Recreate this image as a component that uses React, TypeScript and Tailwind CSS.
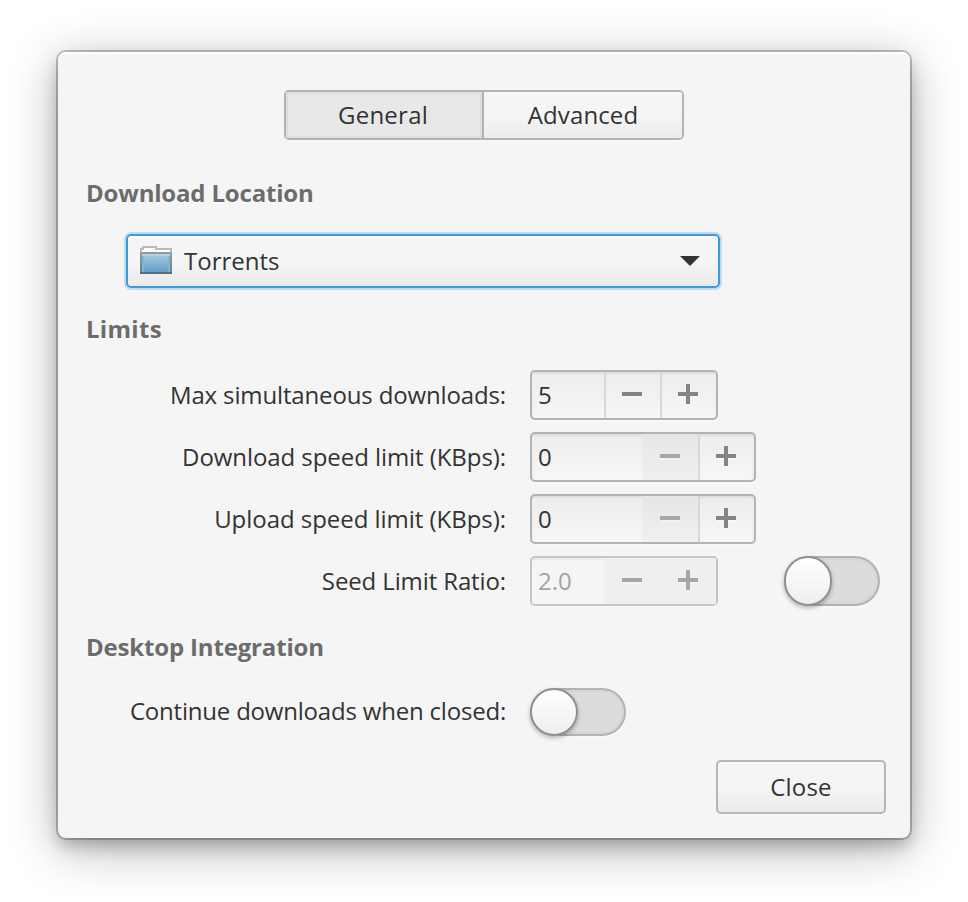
import { ReactNode } from "react";

function Heading({ children, tracking }: { children: ReactNode; tracking: string }) {
  return (
    <h2 className={`text-[24px] leading-[34px] font-bold text-[#6c6c6c] [text-shadow:0_2px_0_rgba(255,255,255,0.5)] ${tracking}`}>
      {children}
    </h2>
  );
}

function Label({ children, tracking }: { children: ReactNode; tracking: string }) {
  return <div className={`w-[448px] text-right whitespace-nowrap ${tracking}`}>{children}</div>;
}

function Sign({ plus, dim }: { plus?: boolean; dim?: boolean }) {
  const d = plus ? "M0 8h8V0h4v8h8v4h-8v8H8v-8H0z" : "M0 8h20v4H0z";
  return (
    <svg width="20" height="22" viewBox="0 0 20 22" className="block">
      <path d={d} transform="translate(0 2)" fill="#fff" fillOpacity="0.4" />
      <path d={d} fill={dim ? "#a6a6a6" : "#848484"} />
    </svg>
  );
}

interface SpinProps {
  value: string;
  entry: string;
  minusOff?: boolean;
  off?: boolean;
}

function Spin({ value, entry, minusOff, off }: SpinProps) {
  const frame = off
    ? "border-[#c6c6c6] bg-[#f5f5f5] text-[#a3a3a3] shadow-[inset_0_2px_0_#ebebeb,0_2px_0_rgba(255,255,255,0.3)]"
    : "border-[#b3b3b3] bg-linear-to-b from-[#ececec] to-[#f7f7f7] shadow-[inset_0_2px_0_#e0e0e0,inset_2px_0_0_#efefef,inset_-2px_0_0_#efefef,0_2px_0_rgba(255,255,255,0.3)]";
  const minus = off
    ? "bg-[#efefef] pl-[18px]"
    : minusOff
      ? "bg-linear-to-b from-[#e6e6e6] to-[#f0f0f0] pl-[18px]"
      : "border-l-2 border-[#d8d8d8] pl-[16px]";
  const plus = off ? "bg-[#efefef] pl-[18px]" : "border-l-2 border-[#d8d8d8] pl-[16px]";
  return (
    <div className={`flex h-[50px] rounded-[5px] border-2 ${frame}`}>
      <div className={`flex items-center pl-[6px] ${entry}`}>{value}</div>
      <div className={`w-[56px] pt-[12px] ${minus}`}>
        <Sign dim={off || minusOff} />
      </div>
      <div className={`w-[56px] pt-[12px] ${plus}`}>
        <Sign plus dim={off} />
      </div>
    </div>
  );
}

function Switch({ size }: { size: string }) {
  return (
    <div className={`w-[96px] rounded-full border-2 border-[#b3b3b3] bg-[#dcdcdc] shadow-[inset_0_0_0_2px_#d5d5d5,0_2px_0_rgba(255,255,255,0.3)] ${size}`}>
      <div className="-mt-[2px] -ml-[2px] h-[calc(100%+4px)] w-[48px] rounded-full border-2 border-[#909090] bg-linear-to-b from-white to-[#eeeeee] shadow-[0_2px_4px_rgba(0,0,0,0.28)]" />
    </div>
  );
}

function FolderIcon() {
  return (
    <svg width="32" height="28" viewBox="0 0 32 28">
      <defs>
        <linearGradient id="folder" x1="0" y1="0" x2="0" y2="1">
          <stop offset="0" stopColor="#a3c7df" />
          <stop offset="1" stopColor="#639dc7" />
        </linearGradient>
        <linearGradient id="edge" x1="0" y1="0" x2="0" y2="1">
          <stop offset="0" stopColor="#9a9a9a" />
          <stop offset="1" stopColor="#5f7f96" />
        </linearGradient>
      </defs>
      <path d="M1 8V3h2V1h13v2h15v5" fill="#fdfdfd" stroke="#bababa" strokeWidth="2" />
      <rect x="0" y="6" width="32" height="22" fill="url(#edge)" />
      <rect x="2" y="8" width="28" height="18" fill="#b4d2e5" />
      <rect x="4" y="10" width="24" height="16" fill="url(#folder)" />
      <rect x="2" y="10" width="2" height="16" fill="#83b2d3" />
      <rect x="28" y="10" width="2" height="16" fill="#83b2d3" />
      <rect x="0" y="26" width="32" height="2" fill="#4d6f88" />
    </svg>
  );
}

export default function App() {
  return (
    <div className="h-[902px] w-[968px] overflow-hidden bg-white px-[58px] pt-[52px] font-['Open_Sans','Noto_Sans',sans-serif] text-[24px] leading-[34px] text-[#333333]">
      <main className="flex h-[786px] w-[852px] flex-col rounded-[8px] bg-[#f5f5f5] shadow-[inset_0_2px_0_#ffffff,0_0_0_2px_rgba(0,0,0,0.22),0_8px_16px_rgba(0,0,0,0.22),0_10px_50px_rgba(0,0,0,0.31)]">
        <div className="mt-[38px] ml-[226px] flex h-[50px] w-[400px] rounded-[5px] border-2 border-[#b3b3b3] text-center shadow-[0_2px_0_rgba(255,255,255,0.3)]">
          <div className="flex w-[198px] items-center justify-center border-r-2 border-[#b3b3b3] bg-[#e8e8e8] pr-[2px] tracking-[0.25px] shadow-[inset_0_0_0_2px_#dddddd]">General</div>
          <div className="flex w-[198px] items-center justify-center rounded-r-[3px] bg-linear-to-b from-[#f5f5f5] from-50% to-[#ebebeb] tracking-[0.12px] shadow-[inset_0_2px_0_#fafafa]">Advanced</div>
        </div>

        <div className="mt-[36px] ml-[28px]"><Heading tracking="tracking-[-0.18px]">Download Location</Heading></div>
        <div className="mt-[24px] ml-[68px] flex h-[54px] w-[594px] items-center rounded-[5px] border-2 border-[#3d9bdc] bg-linear-to-b from-[#f5f5f5] from-50% to-[#ebebeb] pr-[18px] pl-[12px] shadow-[0_0_0_2px_#c3dced,inset_0_2px_0_#fcfcfc]">
          <div className="-mt-[2px]"><FolderIcon /></div>
          <span className="ml-[12px] flex-1">Torrents</span>
          <svg width="20" height="10" viewBox="0 0 20 10"><path d="M0 0h20L10 10z" fill="#333" /></svg>
        </div>

        <div className="mt-[24px] ml-[28px]"><Heading tracking="tracking-[0.3px]">Limits</Heading></div>
        <div className="mt-[24px] flex flex-col gap-[12px]">
          <div className="flex items-center gap-[24px]">
            <Label tracking="tracking-[-0.14px]">Max simultaneous downloads:</Label>
            <Spin value="5" entry="w-[72px]" />
          </div>
          <div className="flex items-center gap-[24px]">
            <Label tracking="tracking-[-0.07px]">Download speed limit (KBps):</Label>
            <Spin value="0" entry="w-[110px]" minusOff />
          </div>
          <div className="flex items-center gap-[24px]">
            <Label tracking="tracking-[-0.04px]">Upload speed limit (KBps):</Label>
            <Spin value="0" entry="w-[110px]" minusOff />
          </div>
          <div className="flex items-center gap-[24px]">
            <Label tracking="tracking-[-0.12px]">Seed Limit Ratio:</Label>
            <Spin value="2.0" entry="w-[72px]" off />
            <div className="ml-[42px]"><Switch size="h-[50px]" /></div>
          </div>
        </div>

        <div className="mt-[24px] ml-[28px]"><Heading tracking="tracking-[-0.17px]">Desktop Integration</Heading></div>
        <div className="mt-[24px] flex h-[48px] items-start gap-[24px]">
          <div className="pt-[6px]"><Label tracking="tracking-[-0.2px]">Continue downloads when closed:</Label></div>
          <Switch size="h-[48px]" />
        </div>
        <button className="mt-[24px] ml-[658px] h-[54px] w-[170px] rounded-[5px] border-2 border-[#b6b6b6] bg-linear-to-b from-[#f5f5f5] from-50% to-[#ebebeb] tracking-[0.2px] shadow-[inset_0_2px_0_#fafafa,0_2px_0_rgba(255,255,255,0.3)]">
          Close
        </button>
      </main>
    </div>
  );
}
